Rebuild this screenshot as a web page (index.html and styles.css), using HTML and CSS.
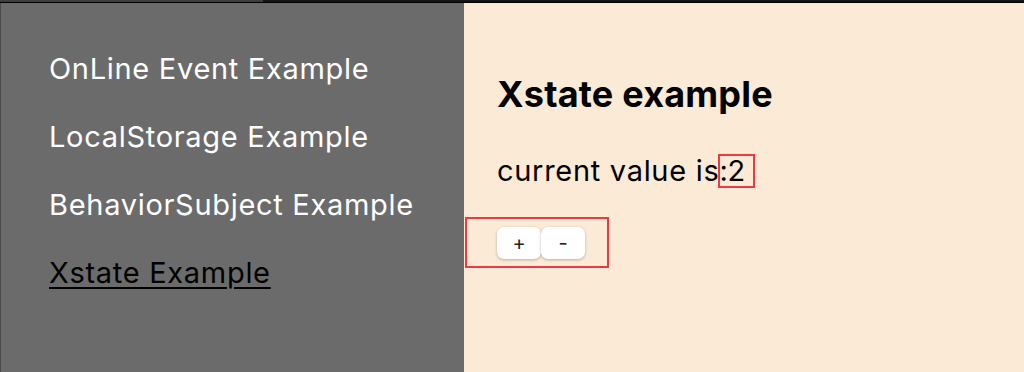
FILE: index.html
```html
<!DOCTYPE html>
<html>
  <head>
    <title>Xstate Example</title>
    <link rel="stylesheet" href="styles.css">
  </head>
  <body>
    <div class="topbar"></div>
    <div class="layout">
      <!-- sidebar navigation -->
      <nav class="sidebar">
        <a class="nav-link" href="#">OnLine Event Example</a>
        <a class="nav-link" href="#">LocalStorage Example</a>
        <a class="nav-link" href="#">BehaviorSubject Example</a>
        <a class="nav-link active" href="#">Xstate Example</a>
      </nav>

      <!-- main content -->
      <main class="content">
        <h1 class="title">Xstate example</h1>
        <p class="value">current value is:<span class="outlined count">2</span></p>
        <div class="controls outlined">
          <button class="btn">+</button>
          <button class="btn">-</button>
        </div>
      </main>
    </div>
  </body>
</html>
```
FILE: styles.css
```css
html,
body {
  margin: 0;
  height: 100%;
}
body {
  font-family: Inter, "Noto Sans", sans-serif;
  display: flex;
  flex-direction: column;
  background: #faead6;
}
.topbar {
  height: 3px;
  flex: none;
  background: linear-gradient(to right, #3e3e3e 263px, #141414 263px);
  border-bottom: 1px solid #000;
  box-sizing: border-box;
}
.layout {
  flex: 1;
  display: flex;
}
.sidebar {
  width: 464px;
  flex: none;
  background: #6b6b6b;
  border-left: 1px solid #4a4a4a;
  display: flex;
  flex-direction: column;
  align-items: flex-start;
  gap: 34px;
  padding: 49px 0 0 48px;
  box-sizing: border-box;
}
.nav-link {
  color: #fff;
  text-decoration: none;
  font-size: 29px;
  letter-spacing: 0.7px;
  line-height: 34px;
}
.nav-link.active {
  color: #000;
  text-decoration: underline;
  text-decoration-thickness: 2px;
  text-underline-offset: 4px;
}
.content {
  flex: 1;
  padding: 0 0 0 33px;
}
.title {
  font-size: 36px;
  font-weight: 700;
  letter-spacing: 0.2px;
  margin: 69px 0 0;
  line-height: 44px;
}
.value {
  font-size: 29px;
  letter-spacing: 0.7px;
  margin: 38px 0 0;
  line-height: 34px;
}
.outlined {
  outline: 2px solid #ec3a44;
}
.count {
  display: inline-block;
  vertical-align: top;
  margin: 2px 0 0 -8px;
  height: 30px;
  line-height: 30px;
  padding: 0 7px 0 7px;
}
.controls {
  display: flex;
  width: fit-content;
  margin: 31px 0 0 -30px;
  padding: 8px 22px 7px 30px;
}
.btn {
  width: 44px;
  height: 32px;
  background: #fff;
  border: none;
  border-radius: 7px;
  box-shadow: 0 1px 3px rgba(0, 0, 0, 0.25);
  font-family: Inter, sans-serif;
  font-size: 20px;
  font-weight: 400;
  color: #222;
  padding: 0;
}
```
